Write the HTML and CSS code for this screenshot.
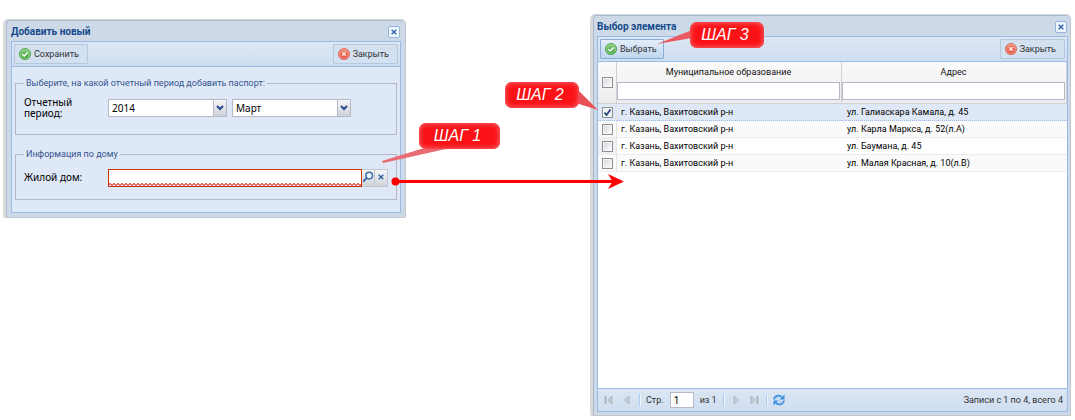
FILE: index.html
```html
<!DOCTYPE html>
<html lang="ru">
<head>
<meta charset="utf-8">
<title>Добавить новый</title>
<link rel="stylesheet" href="styles.css">
</head>
<body>
<svg class="defs" width="0" height="0" aria-hidden="true">
  <defs>
    <linearGradient id="gGreen" x1="0" y1="0" x2="0" y2="1"><stop offset="0" stop-color="#8ed284"/><stop offset="1" stop-color="#3a9b35"/></linearGradient>
    <linearGradient id="gRed" x1="0" y1="0" x2="0" y2="1"><stop offset="0" stop-color="#f08d7d"/><stop offset="1" stop-color="#e04a36"/></linearGradient>
    <symbol id="ok" viewBox="0 0 12 12"><circle cx="6" cy="6" r="5.5" fill="url(#gGreen)" stroke="#4ea548"/><circle cx="6" cy="6" r="4.5" fill="none" stroke="#b4e0ae" stroke-width=".6"/><path d="M3.4 6.2 5.3 8 8.700 4.400" fill="none" stroke="#fff" stroke-width="1.500"/></symbol>
    <symbol id="no" viewBox="0 0 12 12"><circle cx="6" cy="6" r="5.5" fill="url(#gRed)" stroke="#dc6a5c"/><circle cx="6" cy="6" r="4.5" fill="none" stroke="#f6b5aa" stroke-width=".6"/><path d="M4.200 4.200 7.800 7.800M7.800 4.200 4.200 7.800" stroke="#fbe4e0" stroke-width="1.300"/></symbol>
    <symbol id="x" viewBox="0 0 12 12"><path d="M2.500 2.500 9.500 9.500M9.500 2.500 2.500 9.500" stroke="#2f5fa5" stroke-width="2"/></symbol>
  </defs>
</svg>
<main class="stage">
  <section class="window form-window">
    <header class="title"><h1>Добавить новый</h1><button class="close" aria-label="Закрыть окно"><svg viewBox="0 0 12 12"><use href="#x"/></svg></button></header>
    <div class="body">
      <div class="toolbar">
        <button class="btn"><svg viewBox="0 0 12 12"><use href="#ok"/></svg>Сохранить</button>
        <button class="btn"><svg viewBox="0 0 12 12"><use href="#no"/></svg>Закрыть</button>
      </div>
      <form class="form">
        <fieldset>
          <legend>Выберите, на какой отчетный период добавить паспорт:</legend>
          <div class="row">
            <label for="year">Отчетный период:</label>
            <select id="year" class="combo"><option>2014</option></select>
            <select class="combo" aria-label="Месяц"><option>Март</option></select>
          </div>
        </fieldset>
        <fieldset>
          <legend>Информация по дому</legend>
          <div class="row">
            <label for="house">Жилой дом:</label>
            <div class="lookup">
              <input id="house" type="text">
              <button type="button" aria-label="Найти"><svg viewBox="0 0 12 12"><circle cx="7.200" cy="4.600" r="3.300" fill="#eef4fb" stroke="#3d6cab" stroke-width="1.500"/><path d="M4.600 7 1.200 10.600" stroke="#3d6cab" stroke-width="2"/></svg></button>
              <button type="button" aria-label="Очистить"><svg class="small" viewBox="0 0 12 12"><use href="#x"/></svg></button>
            </div>
          </div>
        </fieldset>
      </form>
    </div>
  </section>

  <section class="window list-window">
    <header class="title"><h1>Выбор элемента</h1><button class="close" aria-label="Закрыть окно"><svg viewBox="0 0 12 12"><use href="#x"/></svg></button></header>
    <div class="body">
      <div class="toolbar">
        <button class="btn active"><svg viewBox="0 0 12 12"><use href="#ok"/></svg>Выбрать</button>
        <button class="btn"><svg viewBox="0 0 12 12"><use href="#no"/></svg>Закрыть</button>
      </div>
      <div class="grid">
        <table>
          <colgroup><col class="check-col"><col><col></colgroup>
          <thead>
            <tr>
              <th><input type="checkbox" aria-label="Выбрать все"></th>
              <th><label for="f1">Муниципальное образование</label><input id="f1" class="filter" type="text"></th>
              <th><label for="f2">Адрес</label><input id="f2" class="filter" type="text"></th>
            </tr>
          </thead>
          <tbody>
            <tr class="selected"><td><input type="checkbox" checked aria-label="Строка 1"></td><td>г. Казань, Вахитовский р-н</td><td>ул. Галиаскара Камала, д. 45</td></tr>
            <tr><td><input type="checkbox" aria-label="Строка 2"></td><td>г. Казань, Вахитовский р-н</td><td>ул. Карла Маркса, д. 52(л.А)</td></tr>
            <tr><td><input type="checkbox" aria-label="Строка 3"></td><td>г. Казань, Вахитовский р-н</td><td>ул. Баумана, д. 45</td></tr>
            <tr><td><input type="checkbox" aria-label="Строка 4"></td><td>г. Казань, Вахитовский р-н</td><td>ул. Малая Красная, д. 10(л.В)</td></tr>
          </tbody>
        </table>
      </div>
      <footer class="paging">
        <button aria-label="Первая"><svg viewBox="0 0 12 12"><path d="M2.5 2V10" stroke="#a3adb8" stroke-width="1.6"/><path d="M9 2V10L4.5 6Z" fill="#c5cdd6" stroke="#a3adb8" stroke-width=".8"/></svg></button>
        <button aria-label="Предыдущая"><svg viewBox="0 0 12 12"><path d="M8 2V10L3.5 6Z" fill="#c5cdd6" stroke="#a3adb8" stroke-width=".8"/></svg></button>
        <span class="sep"></span>
        <label for="page">Стр.</label><input id="page" type="text" value="1"><span>из 1</span>
        <span class="sep"></span>
        <button aria-label="Следующая"><svg viewBox="0 0 12 12"><path d="M4 2V10L8.500 6Z" fill="#c5cdd6" stroke="#a3adb8" stroke-width=".8"/></svg></button>
        <button aria-label="Последняя"><svg viewBox="0 0 12 12"><path d="M9.500 2V10" stroke="#a3adb8" stroke-width="1.6"/><path d="M3 2V10L7.500 6Z" fill="#c5cdd6" stroke="#a3adb8" stroke-width=".8"/></svg></button>
        <span class="sep"></span>
        <button aria-label="Обновить"><svg viewBox="0 0 12 12"><path d="M1 5.500C1.500 1.500 6 .5 9 3M11 6.500C10.500 10.500 6 11.500 3 9" fill="none" stroke="#3d8fe0" stroke-width="1.700"/><path d="M11.500.5V5.500H6.500ZM.5 11.500V6.500H5.500Z" fill="#3d8fe0"/><path d="M2.500 5.500C4 3.500 6 3.500 7.500 4.500M9.500 6.500C8 8.500 6 8.500 4.500 7.500" fill="none" stroke="#9fd0fa" stroke-width="1"/></svg></button>
        <span class="total">Записи с 1 по 4, всего 4</span>
      </footer>
    </div>
  </section>

  <svg class="marks" viewBox="0 0 1075 420" aria-hidden="true">
    <path d="M382 161 L421 149 L446 149 L383 163Z" fill="#ea6a72"/>
    <path d="M578 90 L598 110 L573 102Z" fill="#ea5058"/>
    <path d="M657 44 L692 30 L692 38Z" fill="#ea5a62"/>
    <circle cx="395.500" cy="181.500" r="4" fill="#f00"/>
    <path d="M395 180H613V183H395Z" fill="#f00"/>
    <path d="M608 174 624 181.500 608 189 612.500 181.500Z" fill="#f00"/>
  </svg>
  <div class="callout step1">ШАГ 1</div>
  <div class="callout step2">ШАГ 2</div>
  <div class="callout step3">ШАГ 3</div>
</main>
</body>
</html>
```
FILE: styles.css
```css
* { box-sizing: border-box; }
body {
  margin: 0;
  background: #fff;
  color: #222;
  font: 9px/13px Roboto, "Noto Sans", sans-serif;
}
button, input, select { font: inherit; color: inherit; margin: 0; padding: 0; }
svg { display: block; width: 12px; height: 12px; }
.defs { position: absolute; width: 0; height: 0; }

.stage {
  position: relative;
  display: grid;
  grid-template-columns: 403fr 481fr;
  column-gap: 184px;
  align-items: start;
  padding: 14px 4px 5px 3px;
}
.window {
  display: flex;
  flex-direction: column;
  padding: 0 4px 4px 6px;
  background: #cdd9e7;
  border: 1px solid #c3c7cd;
  border-top-color: #d5d7da;
  border-left: 3px solid #d9dadc;
  border-radius: 5px 5px 2px 2px;
  box-shadow: inset 1px 1px 0 #a9b9cd;
}
.form-window { margin-top: 5px; padding-left: 5px; }
.list-window { padding-left: 4px; padding-right: 2px; padding-bottom: 3px; }
.title {
  display: flex;
  align-items: center;
  justify-content: space-between;
  height: 21px;
  padding-top: 2px;
  padding-right: 1px;
}
.title h1 { margin: 0; font-size: 10px; line-height: 13px; color: #15498b; }
.close {
  display: grid;
  place-items: center;
  width: 12px;
  height: 12px;
  background: #eef5fd;
  border: 1px solid #93b5e0;
  border-radius: 2px;
}
.close svg { width: 8px; height: 8px; }
.body {
  display: flex;
  flex: 1;
  flex-direction: column;
  border: 1px solid #99bbe8;
  background: #dfe8f6;
}
.toolbar {
  display: flex;
  justify-content: space-between;
  height: 25px;
  padding: 2px;
  background: linear-gradient(#dde7f3, #cfdef0);
  border-bottom: 1px solid #99bbe8;
}
.btn {
  display: flex;
  align-items: center;
  gap: 3px;
  padding: 0 8px 0 4px;
  color: #333;
  background: #d3e0f0;
  border: 1px solid #b4c8e0;
  border-radius: 1px;
}
.active { padding-right: 6px; background: linear-gradient(#e2edf9, #c0d6ee); border-color: #8bacd8; }

.form { display: flex; flex-direction: column; gap: 13px; padding: 10px 3px 12px; }
fieldset { min-width: 0; margin: 0; padding: 8px 8px 15px; border: 1px solid #b5b8c8; }
fieldset + fieldset { padding-bottom: 12px; }
legend { padding: 0 2px; line-height: 12px; color: #35558f; }
.row { display: flex; align-items: center; gap: 5px; min-height: 19px; font: 10px/13px "Noto Sans", sans-serif; }
.row label { width: 79px; line-height: 11px; color: #000; }
.combo {
  appearance: none;
  width: 119px;
  height: 18px;
  padding: 0 16px 0 3px;
  color: #000;
  border: 1px solid #b5b8c8;
  border-radius: 0;
  background:
    url("data:image/svg+xml,%3Csvg xmlns='http://www.w3.org/2000/svg' width='8' height='6'%3E%3Cpath d='M1 1 4 4 7 1' fill='none' stroke='%2324488f' stroke-width='2'/%3E%3C/svg%3E") right 2px top 5px no-repeat,
    linear-gradient(90deg, #b5b8c8 1px, transparent 1px) right / 13px 100% no-repeat,
    linear-gradient(#f6f6f7, #cdd1d8) right / 13px 100% no-repeat,
    #fff;
}
.lookup { display: flex; }
.lookup input {
  width: 254px;
  height: 18px;
  border: 1px solid #cc3300;
  background:
    linear-gradient(45deg, transparent 40%, #f06a70 40% 65%, transparent 65%) 0 100% / 4px 3px repeat-x,
    linear-gradient(-45deg, transparent 40%, #f06a70 40% 65%, transparent 65%) 2px 100% / 4px 3px repeat-x,
    #fff;
}
.lookup button {
  display: grid;
  place-items: center;
  width: 13px;
  height: 18px;
  padding-bottom: 2px;
  background: linear-gradient(#f7f7f8, #cfd3da);
  border: solid #c2c6cf;
  border-width: 1px 1px 1px 0;
}
.lookup .small { width: 8px; height: 8px; }

.grid { height: 326px; background: #fff; }
table { width: 100%; table-layout: fixed; border-collapse: separate; border-spacing: 0; }
.check-col { width: 19px; }
th {
  height: 42px;
  padding: 3px 1px 3px 0;
  font-weight: normal;
  color: #111;
  background: linear-gradient(#fafafa, #ececee);
  border-right: 1px solid #d0d0d0;
  border-bottom: 1px solid #d0d0d0;
}
th:first-child, td:first-child { padding: 0; text-align: center; }
th label { display: block; margin-bottom: 3px; }
.filter { display: block; width: 100%; height: 18px; background: #fff; border: 1px solid #b5b8c8; }
td { height: 17px; padding: 0 4px; line-height: 15px; color: #000; border-bottom: 1px solid #ededed; white-space: nowrap; }
td:nth-child(3) { padding-left: 5px; }
td:first-child { background: #eff0f2; border-right: 1px solid #e4e4e6; }
tr:nth-child(even) td { background-color: #fafafa; }
.selected td, .selected td:first-child { background: #dfe8f6; border-bottom: 1px dotted #a3bae9; }
input[type="checkbox"] {
  appearance: none;
  display: block;
  width: 11px;
  height: 11px;
  margin: 0 auto;
  background: linear-gradient(135deg, #d4d6da, #fff);
  border: 1px solid #8e9096;
  box-shadow: inset 0 0 0 1px #f4f4f4;
}
input[type="checkbox"]:checked {
  background: url("data:image/svg+xml,%3Csvg xmlns='http://www.w3.org/2000/svg' width='9' height='9'%3E%3Cpath d='M1.500 4.500 3.500 7 7.500 1.500' fill='none' stroke='%2328427f' stroke-width='1.800'/%3E%3C/svg%3E") center no-repeat #f2f3f5;
}
.paging {
  display: flex;
  align-items: center;
  height: 23px;
  padding: 0 4px 0 5px;
  gap: 6px;
  color: #333;
  background: linear-gradient(#dce6f3, #cfdef0);
  border-top: 1px solid #99bbe8;
}
.paging button { background: none; border: 0; }
.paging input { width: 24px; height: 16px; padding-left: 3px; font-size: 10px; color: #000; background: #fff; border: 1px solid #b5b8c8; }
.sep { width: 1px; height: 12px; background: #a9cbf5; box-shadow: 1px 0 #eef5fd; }
.total { margin-left: auto; }

.marks { position: absolute; left: 0; top: 0; width: 1075px; height: 420px; pointer-events: none; }
.callout {
  position: absolute;
  display: grid;
  place-items: center;
  width: 74px;
  height: 26px;
  padding-right: 4px;
  font: italic 16px/20px "Liberation Sans", Arial, sans-serif;
  color: #fff;
  background: #fa1216;
  border-radius: 7px;
  box-shadow: inset 0 0 5px 1px #f4646c;
}
.step1 { left: 419px; top: 123px; width: 81px; }
.step2 { left: 505px; top: 82px; }
.step3 { left: 690px; top: 22px; }
```
